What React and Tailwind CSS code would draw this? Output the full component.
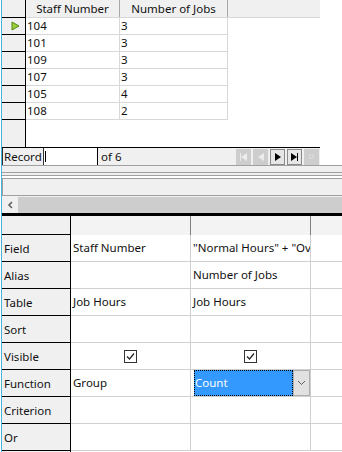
import React from "react";

const font = { fontFamily: '"Noto Sans", "Open Sans", sans-serif' };

function Tri({ dir = "right", color = "#000" }) {
  return (
    <svg width="6" height="8" viewBox="0 0 6 8">
      {dir === "right" ? (
        <path d="M0 0 L6 4 L0 8 Z" fill={color} />
      ) : (
        <path d="M6 0 L0 4 L6 8 Z" fill={color} />
      )}
    </svg>
  );
}

function NavBtn({ children, enabled }) {
  return (
    <div
      className={
        "w-[15px] h-[16px] flex items-center justify-center border " +
        (enabled ? "bg-[#e6e6e6] border-[#8a8a8a]" : "bg-[#cdcdcd] border-[#cdcdcd]")
      }
    >
      {children}
    </div>
  );
}

function Check() {
  return (
    <div className="w-[13px] h-[13px] border border-[#333] bg-white flex items-center justify-center">
      <svg width="11" height="11" viewBox="0 0 11 11">
        <path d="M2 5.5 L4.5 8 L9 2.5" fill="none" stroke="#222" strokeWidth="1.2" />
      </svg>
    </div>
  );
}

const topRows = [
  ["104", "3"],
  ["101", "3"],
  ["109", "3"],
  ["107", "3"],
  ["105", "4"],
  ["108", "2"],
];

const bottomRows = [
  { label: "Field", a: "Staff Number", b: '"Normal Hours" + "Ov' },
  { label: "Alias", a: "", b: "Number of Jobs" },
  { label: "Table", a: "Job Hours", b: "Job Hours" },
  { label: "Sort", a: "", b: "" },
  { label: "Visible", check: true },
  { label: "Function", a: "Group", count: true },
  { label: "Criterion", a: "", b: "" },
  { label: "Or", a: "", b: "" },
];

export default function App() {
  return (
    <div
      className="w-[342px] h-[452px] bg-white overflow-hidden flex text-[11.5px] text-[#111]"
      style={font}
    >
      <div className="w-[1px] bg-white shrink-0" />
      <div className="w-[1px] bg-[#45b4dc] shrink-0" />
      <div className="flex-1 flex flex-col min-w-0">
        {/* Top data grid */}
        <div className="h-[147px] flex w-[318px]">
          <div className="w-[24px] shrink-0 bg-[#f0f0f0] border-r border-black flex flex-col">
            <div className="h-[18px] border-b border-black" />
            {topRows.map((r, i) => (
              <div key={i} className="h-[17px] border-b border-black flex items-center pl-[9px]">
                {i === 0 && (
                  <svg width="9" height="10" viewBox="0 0 9 10">
                    <path d="M1 1 L8 5 L1 9 Z" fill="#9ccc3c" stroke="#4f8a10" strokeWidth="1" />
                  </svg>
                )}
              </div>
            ))}
          </div>
          <div className="flex-1 flex flex-col">
            <div className="h-[18px] flex bg-[#f0f0f0] border-b border-[#d8d8d8]">
              <div className="w-[94px] border-r border-[#a8a8a8] flex items-center justify-center">
                Staff Number
              </div>
              <div className="w-[108px] border-r border-[#a8a8a8] flex items-center justify-center">
                Number of Jobs
              </div>
              <div className="flex-1" />
            </div>
            {topRows.map((r, i) => (
              <div key={i} className="h-[17px] flex">
                <div className="w-[94px] border-r border-b border-[#d8d8d8] flex items-center pl-[1px]">
                  {r[0]}
                </div>
                <div className="w-[108px] border-r border-b border-[#d8d8d8] flex items-center pl-[1px]">
                  {r[1]}
                </div>
              </div>
            ))}
          </div>
        </div>
        {/* Record bar */}
        <div className="h-[18px] w-[318px] border-t border-black bg-[#f0f0f0] flex items-stretch">
          <div className="w-[42px] border-l border-r border-[#333] flex items-center pl-[1px]">Record</div>
          <div className="w-[54px] bg-white border-r border-black flex items-center">
            <div className="w-px h-[11px] bg-black ml-[1px]" />
          </div>
          <div className="w-[138px] flex items-center pl-[3px]">of 6</div>
          <div className="flex items-center gap-[2px]">
            <NavBtn>
              <div className="flex items-center">
                <div className="w-[1.5px] h-[8px] bg-[#ececec]" />
                <Tri dir="left" color="#ececec" />
              </div>
            </NavBtn>
            <NavBtn>
              <Tri dir="left" color="#ececec" />
            </NavBtn>
            <NavBtn enabled>
              <Tri dir="right" />
            </NavBtn>
            <NavBtn enabled>
              <div className="flex items-center">
                <Tri dir="right" />
                <div className="w-[1.5px] h-[8px] bg-black" />
              </div>
            </NavBtn>
            <NavBtn>
              <div className="w-[5px] h-[5px] rounded-full border border-[#e2e2e2]" />
            </NavBtn>
          </div>
        </div>
        {/* Splitter / toolbar area */}
        <div className="h-[48px] bg-[#f0f0f0] border-t border-[#a0a0a0] flex flex-col">
          <div className="h-[6px]" />
          <div className="h-px bg-[#a0a0a0]" />
          <div className="h-[2px]" />
          <div className="h-px bg-[#a0a0a0]" />
          <div className="h-[2px] bg-white" />
          <div className="h-[18px] border border-[#a0a0a0] border-r-0 bg-[#f0f0f0]" />
          <div className="h-[1px]" />
          <div className="h-[16px] flex">
            <div className="w-[16px] flex items-center justify-center bg-[#f0f0f0]">
              <svg width="7" height="8" viewBox="0 0 7 8">
                <path d="M5 1 L2 4 L5 7" fill="none" stroke="#606060" strokeWidth="1.6" />
              </svg>
            </div>
            <div className="flex-1 bg-[#cdcdcd]" />
          </div>
        </div>
        <div className="h-[3px] bg-black" />
        {/* Bottom design grid */}
        <div className="flex-1 flex">
          <div className="w-[69px] shrink-0 bg-[#f0f0f0] border-r border-black flex flex-col">
            <div className="h-[19px] border-b border-black" />
            {bottomRows.map((r, i) => (
              <div key={i} className="h-[27px] border-b border-black flex items-end pb-[4px] pl-[2px]">
                {r.label}
              </div>
            ))}
          </div>
          <div className="flex-1 flex flex-col">
            <div className="h-[19px] flex bg-[#f3f3f3]">
              <div className="w-[120px] border-r border-[#808080]" />
              <div className="w-[120px] border-r border-[#808080]" />
              <div className="flex-1" />
            </div>
            {bottomRows.map((r, i) => (
              <div key={i} className="h-[27px] flex">
                <div className="w-[120px] border-r border-b border-[#d0d0d0] flex items-center pl-[2px] whitespace-nowrap overflow-hidden">
                  {r.check ? (
                    <div className="w-full flex justify-center pt-[1px] pr-[3px]">
                      <Check />
                    </div>
                  ) : (
                    <span className="pb-[1px]">{r.a}</span>
                  )}
                </div>
                <div className="w-[120px] border-r border-b border-[#d0d0d0] flex items-center pl-[2px] whitespace-nowrap overflow-hidden">
                  {r.check ? (
                    <div className="w-full flex justify-center pt-[1px] pr-[3px]">
                      <Check />
                    </div>
                  ) : r.count ? (
                    <div className="w-[116px] h-[26px] flex ml-[1px]">
                      <div className="flex-1 bg-[#3399ff] text-white flex items-center pl-[1px] outline-1 outline-dotted outline-black -outline-offset-1">
                        Count
                      </div>
                      <div className="w-[17px] bg-[#e1e1e1] border border-[#adadad] flex items-center justify-center">
                        <svg width="9" height="6" viewBox="0 0 9 6">
                          <path d="M1 1 L4.5 4.5 L8 1" fill="none" stroke="#606060" strokeWidth="1" />
                        </svg>
                      </div>
                    </div>
                  ) : (
                    <span className="pb-[1px]">{r.b}</span>
                  )}
                </div>
                <div className="flex-1 border-b border-[#d0d0d0]" />
              </div>
            ))}
          </div>
        </div>
      </div>
    </div>
  );
}
